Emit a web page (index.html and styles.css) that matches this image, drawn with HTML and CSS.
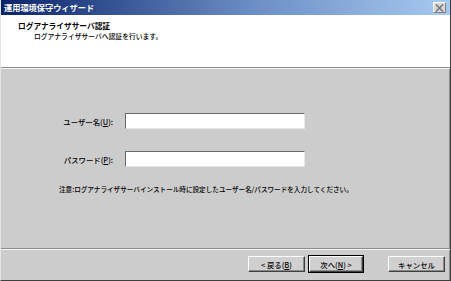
FILE: index.html
```html
<!DOCTYPE html>
<html lang="ja">

<head>
    <meta charset="utf-8">
    <title>運用環境保守ウィザード</title>
    <link rel="stylesheet" href="styles.css">
</head>

<body>
    <div class="window">
        <div class="titlebar">
            <span class="title">運用環境保守ウィザード</span>
            <span class="close">
                <svg width="9" height="8" viewBox="0 0 9 8">
                    <path d="M1 0.5 L8 7.5 M8 0.5 L1 7.5" stroke="#6f6f6f" stroke-width="1.4" />
                </svg>
            </span>
        </div>
        <div class="header">
            <div class="head-title">ログアナライザサーバ認証</div>
            <div class="head-sub">ログアナライザサーバへ認証を行います。</div>
        </div>
        <div class="content">
            <div class="form">
                <label class="label">ユーザー名(<u>U</u>):</label>
                <div class="input"></div>
                <label class="label">パスワード(<u>P</u>):</label>
                <div class="input"></div>
            </div>
            <p class="note">注意:ログアナライザサーバインストール時に設定したユーザー名/パスワードを入力してください。</p>
        </div>
        <div class="footer">
            <div class="btn">&lt; 戻る(<u>B</u>)</div>
            <div class="btn default">次へ(<u>N</u>) &gt;</div>
            <div class="btn cancel">キャンセル</div>
        </div>
    </div>
</body>

</html>
```

FILE: styles.css
```css
* {
    box-sizing: border-box;
}

body {
    margin: 0;
    font-family: "Noto Sans CJK JP", "Noto Sans", sans-serif;
    font-size: 6.6px;
    font-weight: 500;
    color: #000;
}

.window {
    width: 451px;
    height: 281px;
    display: flex;
    flex-direction: column;
    background: #cccccc;
    border-left: 1px solid #e4e4e4;
    border-right: 1px solid #404040;
    border-bottom: 1px solid #404040;
    box-shadow: inset -1px 0 0 #8a8a8a;
}

.titlebar {
    height: 15px;
    display: flex;
    align-items: center;
    justify-content: space-between;
    padding: 0 4px 0 3px;
    background: linear-gradient(to right, #0a246a, #6a8cc4 55%, #a6caf0);
}

.title {
    color: #fff;
    font-weight: bold;
    font-size: 8.2px;
    line-height: 15px;
}

.close {
    width: 13px;
    height: 11px;
    display: flex;
    align-items: center;
    justify-content: center;
    background: #d8d8d8;
    border: 1px solid;
    border-color: #fff #808080 #808080 #fff;
}

.header {
    height: 53px;
    background: #fff;
    padding: 6px 0 0 17px;
    border-bottom: 1px solid #8c8c8c;
    box-shadow: 0 1px 0 #f4f4f4;
}

.head-title {
    font-weight: bold;
    font-size: 7.7px;
    line-height: 10px;
}

.head-sub {
    padding-left: 16px;
    font-size: 6.8px;
    line-height: 11px;
}

.content {
    flex: 1;
    padding-top: 44px;
    border-bottom: 1px solid #8c8c8c;
    box-shadow: 0 1px 0 #f4f4f4;
    margin-top: 1px;
}

.form {
    display: grid;
    grid-template-columns: 112px 180px;
    column-gap: 12px;
    row-gap: 22px;
    align-items: center;
}

.label {
    text-align: right;
    font-size: 7.4px;
}

.input {
    height: 16px;
    background: #fff;
    border: 1px solid;
    border-color: #6a6a6a #e6e6e6 #e6e6e6 #6a6a6a;
}

.note {
    margin: 17px 0 0 58px;
    line-height: 10px;
}

.footer {
    height: 30px;
    display: flex;
    align-items: flex-start;
    padding: 6px 0 0 247px;
    margin-top: 1px;
}

.btn {
    width: 57px;
    height: 16px;
    display: flex;
    align-items: center;
    justify-content: center;
    font-size: 7.4px;
    background: #d0d0d0;
    border: 1px solid;
    border-color: #fff #404040 #404040 #fff;
    box-shadow: inset -1px -1px 0 #8a8a8a;
}

.btn.default {
    margin-left: 4px;
    width: 54px;
    outline: 1px solid #000;
}

.btn.cancel {
    margin-left: 25px;
}
```
